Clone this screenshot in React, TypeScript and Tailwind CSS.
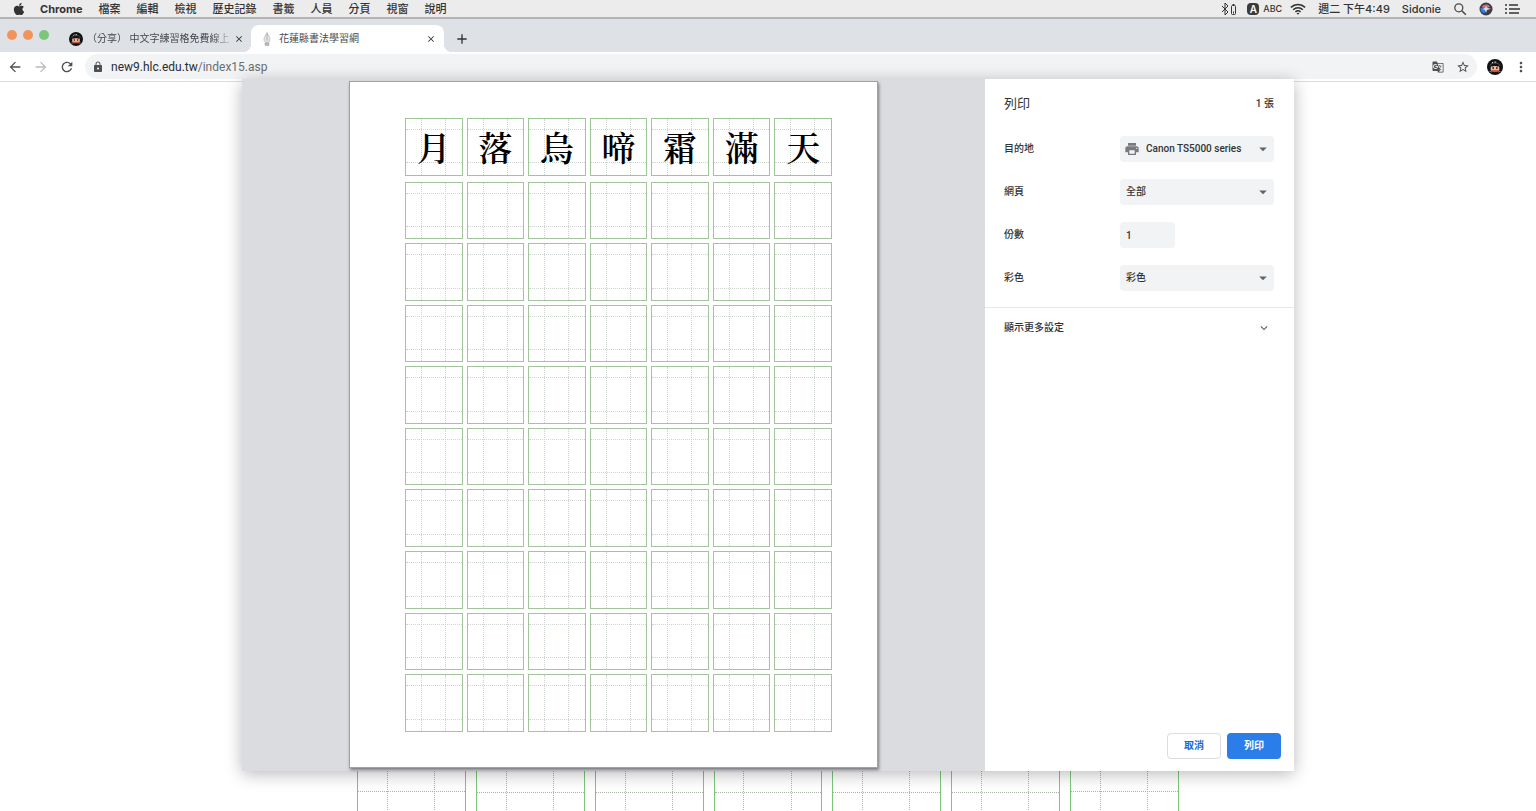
import type { ReactNode } from 'react'
import { FaApple } from 'react-icons/fa'
import {
  MdAdd,
  MdArrowBack,
  MdArrowDropDown,
  MdArrowForward,
  MdClose,
  MdExpandMore,
  MdGTranslate,
  MdLock,
  MdMoreVert,
  MdPrint,
  MdRefresh,
  MdStarBorder,
} from 'react-icons/md'

const MENU_ITEMS = ['檔案', '編輯', '檢視', '歷史記錄', '書籤', '人員', '分頁', '視窗', '說明']
const POEM = ['月', '落', '烏', '啼', '霜', '滿', '天']
const BLANK_ROWS = 9

/* Ninja head used as favicon and profile picture */
function NinjaAvatar({ className }: { className: string }) {
  return (
    <svg viewBox="0 0 26 26" className={className} aria-hidden="true">
      <circle cx="13" cy="13" r="13" fill="#111113" />
      <path d="M5 11c1-6 15-6 16 0" fill="none" stroke="#5b5b60" strokeWidth="1.4" />
      <path d="M8 6.500l2-1.500M12 5h3" stroke="#fff" strokeWidth="1.4" />
      <rect x="6" y="11.500" width="14" height="8" rx="2.500" fill="#f0b8a0" />
      <path d="M8 12.500l3 1.200M18 12.500l-3 1.200" stroke="#111" strokeWidth="1.3" />
      <circle cx="10" cy="15" r="1.300" fill="#111" />
      <circle cx="16" cy="15" r="1.300" fill="#111" />
      <path d="M7 18h12l-2 3H9z" fill="#d2553d" />
      <path d="M4 20l4 1M22 20l-4 1" stroke="#aaa" strokeWidth="1.200" />
    </svg>
  )
}

function BrushIcon() {
  return (
    <svg viewBox="0 0 14 28" className="h-3.5 w-2 shrink-0" aria-hidden="true">
      <path d="M7 1c2 5 6 9 6 14 0 3-2 5-3 6H4c-1-1-3-3-3-6C1 10 5 6 7 1z" fill="#e2e4e5" stroke="#b4b7b9" strokeWidth="1.500" />
      <path d="M7 3v14" stroke="#9da1a4" strokeWidth="1.500" />
      <path d="M3 22h8v5H3z" fill="#b7babc" stroke="#9da1a4" />
    </svg>
  )
}

function BluetoothIcon() {
  return (
    <svg viewBox="0 0 16 14" className="h-3.5 w-4" fill="none" stroke="#333" aria-hidden="true">
      <path d="M1 4l6 6-3 3V1l3 3-6 6" />
      <rect x="10.500" y="3.500" width="4" height="9" rx="1" />
      <path d="M11.500 2.500h2" />
      <path d="M12.500 9.500v2" />
    </svg>
  )
}

function WifiIcon() {
  return (
    <svg viewBox="0 0 18 14" className="h-3.5 w-4" fill="none" stroke="#2f2f2f" strokeWidth="1.700" aria-hidden="true">
      <path d="M1 5.200c4.500-4.300 11.500-4.300 16 0" />
      <path d="M3.600 7.800c3-2.900 7.800-2.900 10.800 0" />
      <path d="M6.100 10.300c1.700-1.500 4.100-1.500 5.800 0" />
      <path d="M9 13.500l-1.600-1.700c.9-.8 2.300-.8 3.200 0z" fill="#2f2f2f" stroke="none" />
    </svg>
  )
}

function SpotlightIcon() {
  return (
    <svg viewBox="0 0 14 14" className="size-3.5" fill="none" stroke="#4a4a4a" strokeWidth="1.300" aria-hidden="true">
      <circle cx="5.800" cy="5.800" r="4" />
      <path d="M8.800 8.800l4 4" strokeWidth="1.600" />
    </svg>
  )
}

function SiriIcon() {
  return (
    <svg viewBox="0 0 14 14" className="size-3.5" aria-hidden="true">
      <circle cx="7" cy="7" r="6.500" fill="#3c3d45" />
      <path d="M2.500 5C4 2 9 1.500 11 4.500L7 7z" fill="#c96f79" />
      <path d="M1.500 6l6 .5-2 5C3 11 1.500 9 1.500 6z" fill="#2f7fe6" />
      <path d="M7 4l1 2 4 .8-4 1.200-1 3-1-3-2.500-1L6 6z" fill="#d5e3ea" />
    </svg>
  )
}

function ListIcon() {
  return (
    <svg viewBox="0 0 16 12" className="h-3 w-4" stroke="#333" strokeWidth="1.500" aria-hidden="true">
      <path d="M0 2h2M0 6h2M0 10h2M4 2h9M4 6h11M4 10h10" />
    </svg>
  )
}

function MenuBar() {
  return (
    <header className="flex h-[19px] items-center justify-between border-b-2 border-[#b3b4b5] bg-[#ececec] pt-px pr-[15px] pl-3 font-[Inter,'Noto_Sans_CJK_TC',sans-serif] text-[11px] leading-4 font-medium text-[#333]">
      <nav className="flex items-center gap-4">
        <button aria-label="Apple"><FaApple className="size-3.5" /></button>
        <button className="-ml-0.5 font-bold">Chrome</button>
        {MENU_ITEMS.map((item) => (
          <button key={item}>{item}</button>
        ))}
      </nav>
      <div className="flex items-center">
        <BluetoothIcon />
        <span className="ml-2.5 flex size-3 items-center justify-center rounded-sm bg-[#3b3b3b] text-[10px] font-semibold text-white">A</span>
        <span className="mr-2 ml-1 text-[9px]">ABC</span>
        <WifiIcon />
        <span className="mx-3">週二 下午4:49</span>
        <span className="mr-3">Sidonie</span>
        <SpotlightIcon />
        <span className="mx-3"><SiriIcon /></span>
        <ListIcon />
      </div>
    </header>
  )
}

function TabStrip() {
  return (
    <div className="flex h-[33px] items-end bg-[#dee1e6] text-[10px] leading-4 text-[#45494d]">
      <div className="flex h-[33px] shrink-0 items-center gap-1.5 pb-0.5 pl-[7px]">
        <span className="size-2.5 rounded-full bg-[#f2935c]" />
        <span className="size-2.5 rounded-full bg-[#f2935c]" />
        <span className="size-2.5 rounded-full bg-[#7cc67a]" />
      </div>
      <div className="ml-5 flex h-[27px] w-[182px] items-center pr-[7px]">
        <NinjaAvatar className="size-3.5 shrink-0" />
        <span className="ml-1 flex-1 mask-r-from-85% whitespace-nowrap">（分享） 中文字練習格免費線上</span>
        <button aria-label="關閉分頁" className="shrink-0 text-[#333]"><MdClose className="size-2.5" /></button>
      </div>
      <div className="relative flex h-[27px] w-[193px] items-center rounded-t-lg bg-white pr-2 pl-3">
        <span className="absolute bottom-0 -left-2 size-2 bg-[radial-gradient(circle_at_0_0,transparent_8px,#fff_8px)]" />
        <span className="absolute -right-2 bottom-0 size-2 bg-[radial-gradient(circle_at_100%_0,transparent_8px,#fff_8px)]" />
        <BrushIcon />
        <span className="ml-2 flex-1 whitespace-nowrap">花蓮縣書法學習網</span>
        <button aria-label="關閉分頁" className="text-[#333]"><MdClose className="size-2.5" /></button>
      </div>
      <button aria-label="新分頁" className="ml-2.5 flex h-[27px] items-center text-[#333]"><MdAdd className="size-4" /></button>
    </div>
  )
}

function Toolbar() {
  return (
    <div className="flex h-[30px] items-center border-b border-[#dcdee0] bg-white px-[7px] text-[#4d5155]">
      <button aria-label="上一頁"><MdArrowBack className="size-4" /></button>
      <button aria-label="下一頁" className="ml-2.5 text-[#b9bbbd]"><MdArrowForward className="size-4" /></button>
      <button aria-label="重新載入" className="ml-2.5"><MdRefresh className="size-4" /></button>
      <div className="ml-2.5 flex h-[25px] flex-1 items-center rounded-full bg-[#f1f3f4] px-[7px]">
        <MdLock className="size-3 shrink-0" />
        <div className="ml-[7px] flex-1 text-[12px] leading-4 text-[#6a6e72]">
          <span className="text-[#2b2d30]">new9.hlc.edu.tw</span>/index15.asp
        </div>
        <button aria-label="翻譯"><MdGTranslate className="size-3" /></button>
        <button aria-label="加入書籤" className="ml-3"><MdStarBorder className="size-3.5" /></button>
      </div>
      <button aria-label="個人資料" className="ml-2.5"><NinjaAvatar className="size-4" /></button>
      <button aria-label="更多" className="ml-2.5"><MdMoreVert className="size-4" /></button>
    </div>
  )
}

/* One practice square: green frame with two dotted guides each way */
function Cell({ guide, frame, children }: { guide: string; frame: string; children?: ReactNode }) {
  return (
    <div className={`relative flex aspect-square min-w-0 items-center justify-center border ${frame}`}>
      <span className={`absolute inset-x-0 top-[18%] bottom-[20%] border-y border-dotted ${guide}`} />
      <span className={`absolute inset-y-0 right-[28%] left-[27%] border-x border-dotted ${guide}`} />
      {children}
    </div>
  )
}

function Paper() {
  return (
    <div className="h-[687px] w-[529px] border border-[#9fa1a3] bg-white pt-9 pr-[45px] pl-[55px] shadow-[1px_2px_3px_#77797c]">
      <div className="grid grid-cols-7 gap-1">
        {POEM.map((char) => (
          <Cell key={char} frame="border-[#9cc894]" guide="border-[#cdd3cd]">
            <span className="relative font-['AR_PL_UKai_TW','Kaiti_TC','DFKai-SB','Noto_Serif_CJK_TC','Noto_Sans_CJK_TC',serif] text-[34px] leading-none font-semibold text-black">{char}</span>
          </Cell>
        ))}
      </div>
      <div className="mt-1.5 grid grid-cols-7 gap-1">
        {Array.from({ length: BLANK_ROWS * 7 }, (_, i) => (
          <Cell key={i} frame="border-[#a3c49c]" guide="border-[#cdd3cd]" />
        ))}
      </div>
    </div>
  )
}

interface SelectRowProps {
  id: string
  label: string
  value: string
  icon?: ReactNode
}

function SelectRow({ id, label, value, icon }: SelectRowProps) {
  return (
    <div className="flex items-center justify-between">
      <label htmlFor={id}>{label}</label>
      <div className="relative h-[26px] w-[154px]">
        {icon}
        <select
          id={id}
          defaultValue={value}
          className={`size-full appearance-none rounded-sm bg-[#f1f3f4] pr-6 ${icon ? 'pl-[26px]' : 'pl-1.5'}`}
        >
          <option>{value}</option>
        </select>
        <MdArrowDropDown className="pointer-events-none absolute top-1 right-0.5 size-[18px] text-[#5f6368]" />
      </div>
    </div>
  )
}

function PrintDialog() {
  return (
    <div
      role="dialog"
      aria-label="列印"
      className="absolute top-[79px] left-1/2 flex h-[692px] w-[1052px] -translate-x-1/2 bg-white shadow-[0_3px_16px_rgba(0,0,0,0.28)]"
    >
      <div className="flex flex-1 justify-center bg-[#dadce0] pt-0.5">
        <Paper />
      </div>
      <div className="flex w-[309px] flex-col text-[10px] leading-4 font-medium text-[#303337]">
        <div className="flex items-center justify-between pt-[17px] pr-5 pl-[19px]">
          <h1 className="text-[13px] font-normal">列印</h1>
          <span>1 張</span>
        </div>
        <form className="mt-6 flex flex-col gap-[17px] border-b border-[#e5e7e9] pr-5 pb-4 pl-[19px]">
          <SelectRow
            id="destination"
            label="目的地"
            value="Canon TS5000 series"
            icon={<MdPrint className="pointer-events-none absolute top-[5px] left-1 size-4 text-[#777a7e]" />}
          />
          <SelectRow id="pages" label="網頁" value="全部" />
          <div className="flex items-center justify-between">
            <label htmlFor="copies">份數</label>
            <div className="w-[154px]">
              <input id="copies" defaultValue="1" className="block h-[26px] w-[55px] rounded-sm bg-[#f1f3f4] px-1.5" />
            </div>
          </div>
          <SelectRow id="color" label="彩色" value="彩色" />
        </form>
        <button className="flex items-center justify-between py-3 pr-[23px] pl-[19px]">
          顯示更多設定
          <MdExpandMore className="size-3.5 text-[#5f6368]" />
        </button>
        <div className="mt-auto flex justify-end gap-1.5 py-3 pr-[13px] font-bold">
          <button className="h-[26px] w-[54px] rounded-sm border border-[#dadce0] text-[#1a66d0]">取消</button>
          <button className="h-[26px] w-[54px] rounded-sm bg-[#2b7de9] text-white">列印</button>
        </div>
      </div>
    </div>
  )
}

export default function App() {
  return (
    <div className="relative flex h-screen flex-col overflow-hidden bg-white font-[Roboto,'Noto_Sans_CJK_TC',sans-serif]">
      <MenuBar />
      <TabStrip />
      <Toolbar />
      <main className="min-h-0 flex-1 pt-[624px]">
        <div className="mx-auto grid w-[822px] grid-cols-7 gap-2.5">
          {POEM.map((char) => (
            <Cell key={char} frame="border-[#7cc67a]" guide="border-[#a9b3a6]" />
          ))}
        </div>
      </main>
      <PrintDialog />
    </div>
  )
}
